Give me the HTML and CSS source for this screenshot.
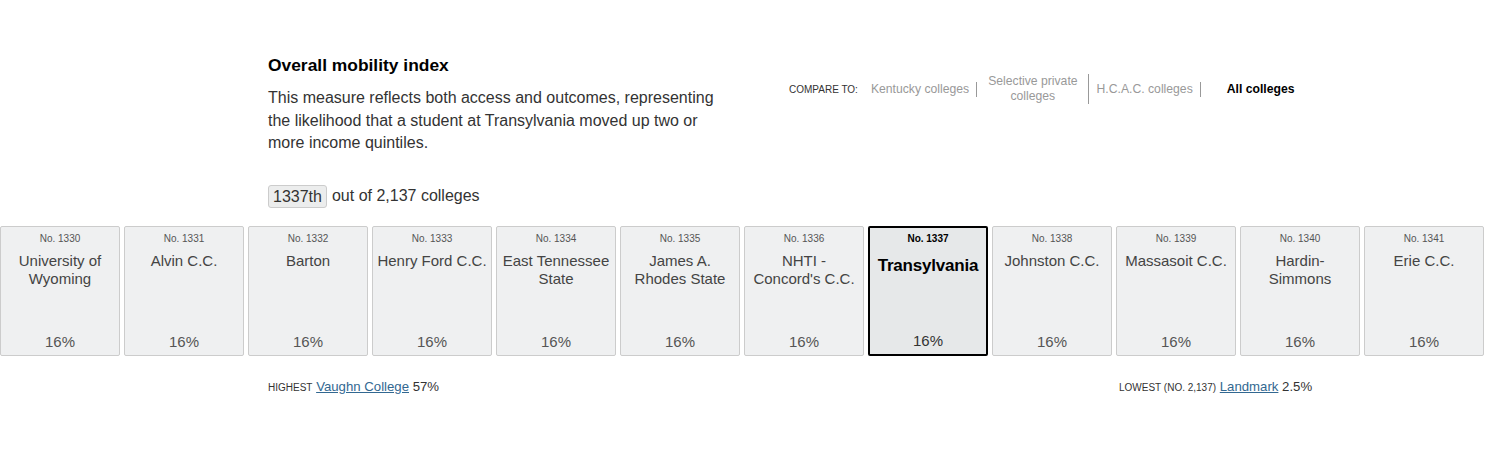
FILE: index.html
```html
<!DOCTYPE html>
<html>
<head>
<meta charset="utf-8">
<link rel="stylesheet" href="styles.css">
</head>
<body>
<div class="page">
  <div class="header">
    <div class="intro">
      <h2 class="title">Overall mobility index</h2>
      <p class="desc">This measure reflects both access and outcomes, representing the likelihood that a student at Transylvania moved up two or more income quintiles.</p>
    </div>
    <div class="compare">
      <span class="compare-label">COMPARE TO:</span>
      <span class="opt">Kentucky colleges</span>
      <span class="opt opt-wide">Selective private<br>colleges</span>
      <span class="opt">H.C.A.C. colleges</span>
      <span class="opt opt-active">All colleges</span>
    </div>
  </div>
  <div class="rank"><span class="rank-badge">1337th</span> out of 2,137 colleges</div>
  <div class="cards">
    <div class="card"><div class="no">No. 1330</div><div class="name">University of Wyoming</div><div class="pct">16%</div></div>
    <div class="card"><div class="no">No. 1331</div><div class="name">Alvin C.C.</div><div class="pct">16%</div></div>
    <div class="card"><div class="no">No. 1332</div><div class="name">Barton</div><div class="pct">16%</div></div>
    <div class="card"><div class="no">No. 1333</div><div class="name">Henry Ford C.C.</div><div class="pct">16%</div></div>
    <div class="card"><div class="no">No. 1334</div><div class="name">East Tennessee State</div><div class="pct">16%</div></div>
    <div class="card"><div class="no">No. 1335</div><div class="name">James A. Rhodes State</div><div class="pct">16%</div></div>
    <div class="card"><div class="no">No. 1336</div><div class="name">NHTI - Concord's C.C.</div><div class="pct">16%</div></div>
    <div class="card card-active"><div class="no">No. 1337</div><div class="name">Transylvania</div><div class="pct">16%</div></div>
    <div class="card"><div class="no">No. 1338</div><div class="name">Johnston C.C.</div><div class="pct">16%</div></div>
    <div class="card"><div class="no">No. 1339</div><div class="name">Massasoit C.C.</div><div class="pct">16%</div></div>
    <div class="card"><div class="no">No. 1340</div><div class="name">Hardin-<br>Simmons</div><div class="pct">16%</div></div>
    <div class="card"><div class="no">No. 1341</div><div class="name">Erie C.C.</div><div class="pct">16%</div></div>
  </div>
  <div class="extremes">
    <div class="ext ext-high"><span class="ext-label">HIGHEST</span> <a class="ext-link" href="#">Vaughn College</a> 57%</div>
    <div class="ext ext-low"><span class="ext-label">LOWEST (NO. 2,137)</span> <a class="ext-link" href="#">Landmark</a> 2.5%</div>
  </div>
</div>
</body>
</html>
```

FILE: styles.css
```css
* { box-sizing: border-box; }
html, body { margin: 0; padding: 0; background: #fff; }
body {
  font-family: "Liberation Sans", Arial, sans-serif;
  color: #333;
  width: 1486px;
  height: 468px;
  overflow: hidden;
}
.page { padding-top: 55px; }
.header {
  display: flex;
  padding-left: 268px;
}
.intro { width: 470px; }
.title {
  margin: 0;
  font-size: 17.4px;
  font-weight: 700;
  color: #000;
  line-height: 20px;
}
.desc {
  margin: 12px 0 0;
  width: 462px;
  font-size: 16px;
  line-height: 22.5px;
  color: #333;
}
.compare {
  display: flex;
  align-items: center;
  margin-left: 51px;
  margin-top: 19px;
  height: 30px;
}
.compare-label {
  font-size: 10px;
  color: #333;
  margin-right: 5px;
}
.opt {
  font-size: 12.2px;
  line-height: 15px;
  color: #999;
  padding: 0 7px 0 8px;
  border-right: 1px solid #999;
  text-align: center;
}
.opt-wide { padding: 0 10px 0 11px; }
.opt-active {
  border-right: none;
  color: #000;
  font-weight: 700;
  padding-left: 26px;
}
.rank {
  margin-top: 30px;
  padding-left: 268px;
  font-size: 16px;
  color: #333;
  display: flex;
  align-items: center;
  gap: 5px;
}
.rank-badge {
  background: #eceded;
  border: 1px solid #ccc;
  border-radius: 3px;
  padding: 2px 4px;
  line-height: 17px;
}
.cards {
  margin-top: 18px;
  display: flex;
  gap: 4px;
}
.card {
  width: 120px;
  height: 130px;
  flex: none;
  background: #eff0f1;
  border: 1px solid #ccc;
  border-radius: 2px;
  display: flex;
  flex-direction: column;
  align-items: center;
  text-align: center;
  padding: 6px 4px 4px;
}
.no {
  font-size: 10px;
  line-height: 12px;
  color: #555;
}
.name {
  margin-top: 7px;
  font-size: 15px;
  line-height: 18px;
  color: #444;
  flex: 1;
}
.pct {
  font-size: 15px;
  line-height: 18px;
  color: #555;
}
.card-active {
  border: 2px solid #000;
  background: #e6e8e9;
  padding: 5px 3px 4px;
}
.card-active .no { color: #000; font-weight: 700; }
.card-active .name {
  color: #000;
  font-weight: 700;
  font-size: 17px;
  letter-spacing: -0.2px;
  margin-top: 12px;
}
.card-active .pct { color: #333; }
.extremes {
  margin-top: 23px;
  display: flex;
  padding-left: 268px;
}
.ext { font-size: 13.2px; color: #333; }
.ext-high { width: 851px; }
.ext-label { font-size: 10px; color: #333; }
.ext-link { color: #326891; text-decoration: underline; }
```
